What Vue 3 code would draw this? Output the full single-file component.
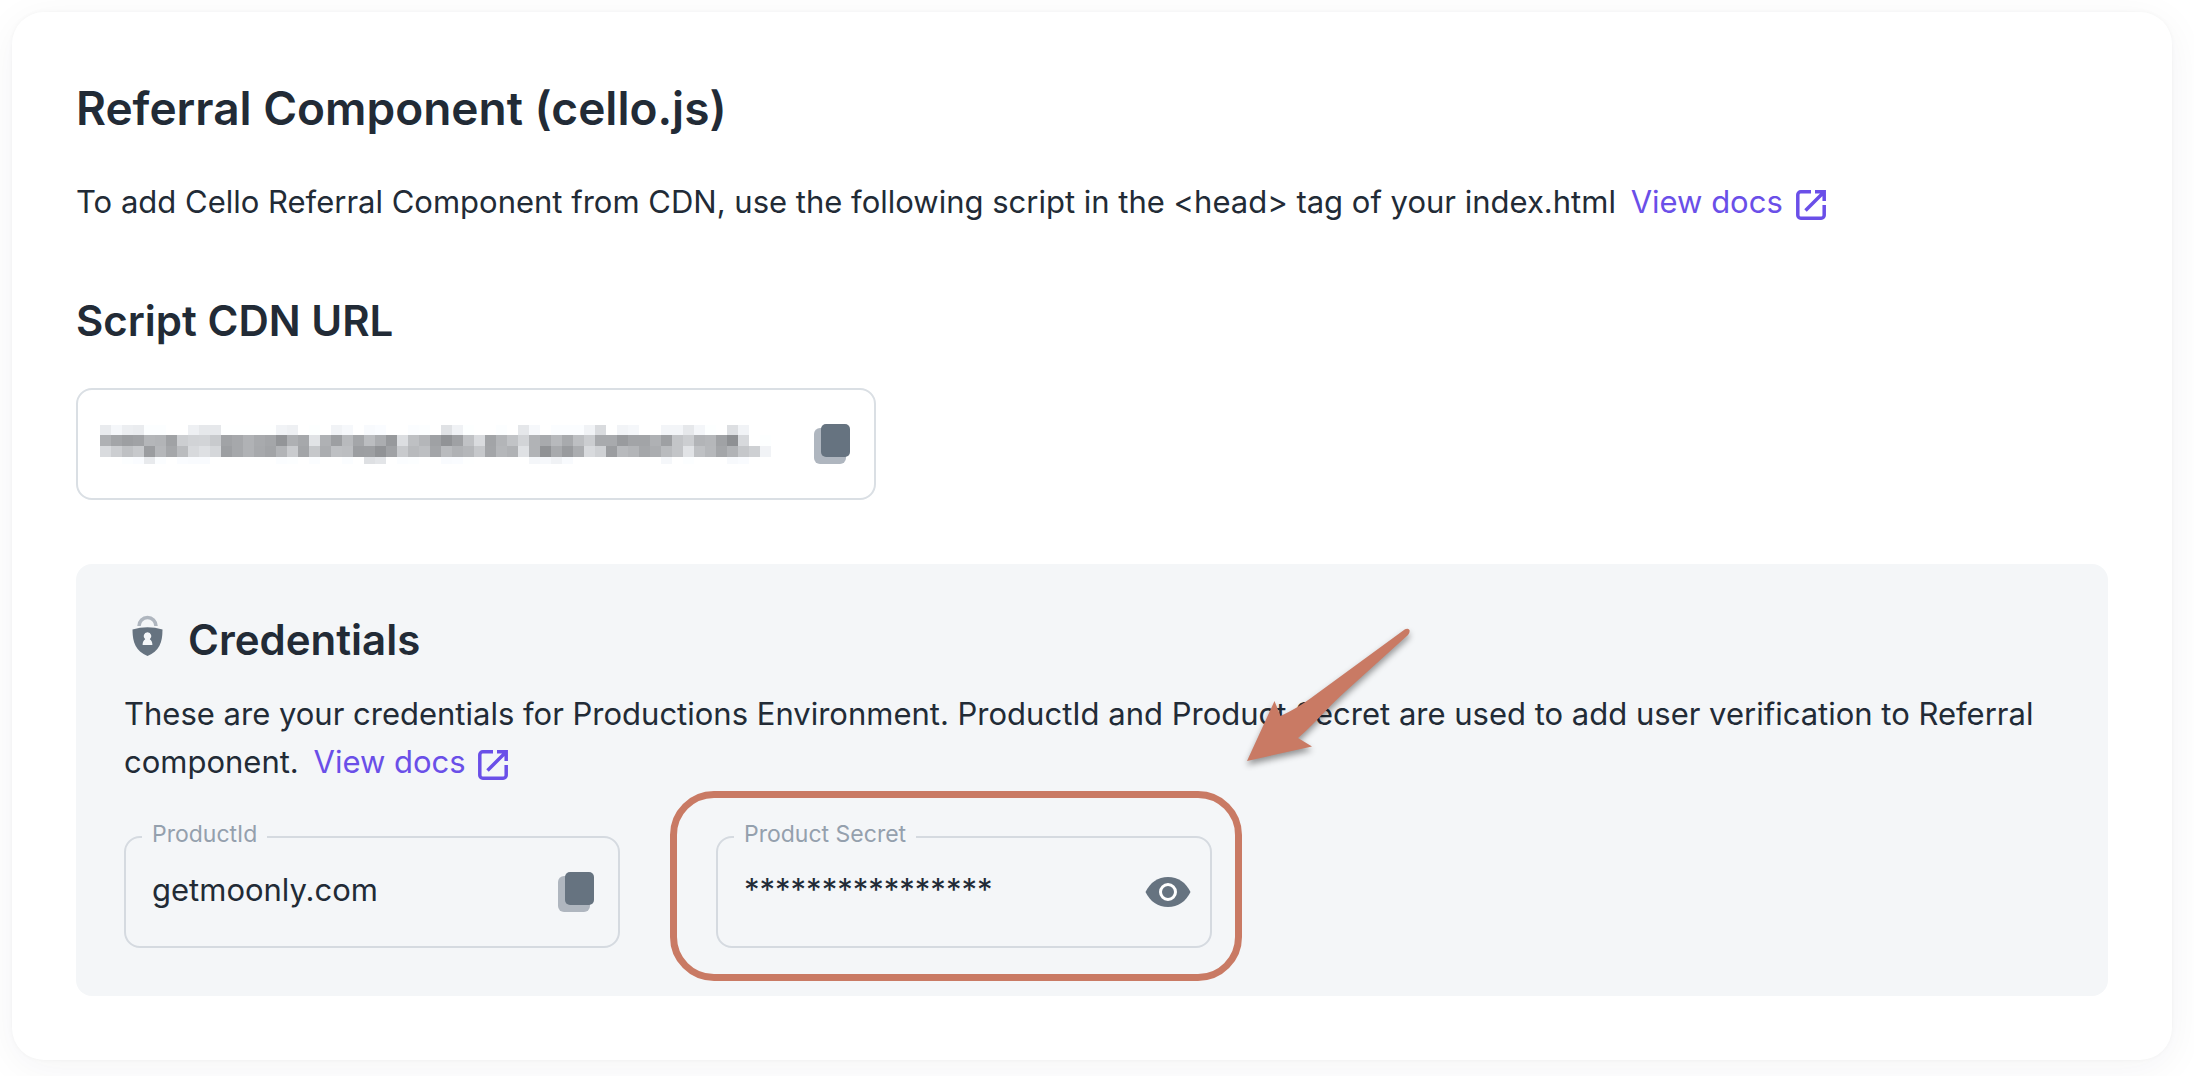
<template>
  <main class="page">
    <section class="card">
      <h1 class="title">Referral Component (cello.js)</h1>
      <p class="text intro">
        To add Cello Referral Component from CDN, use the following script in the &lt;head&gt; tag of your index.html
        <a class="docs" href="#cdn-docs">
          View docs
          <svg class="external" viewBox="0 0 30 30" aria-hidden="true">
            <path d="M15 1.8H4.800a3 3 0 0 0-3 3v20.400a3 3 0 0 0 3 3h20.400a3 3 0 0 0 3-3V15" />
            <path d="M19 1.800h9.200V11M27.500 2.500 9.500 20.500" />
          </svg>
        </a>
      </p>

      <h2 class="subtitle">Script CDN URL</h2>
      <div class="url-field">
        <svg class="url" viewBox="0 0 671 39" role="img" aria-label="Script URL" shape-rendering="crispEdges">
          <rect
            v-for="cell in cells"
            :key="cell.key"
            :x="cell.x"
            :y="cell.y"
            width="11"
            :height="cell.height"
            :fill="cell.fill"
          />
        </svg>
        <button class="icon-button" type="button" aria-label="Copy URL">
          <svg class="copy" viewBox="0 0 36 40">
            <rect class="light" y="4" width="32" height="36" rx="6" />
            <rect class="dark" x="7" width="29" height="33" rx="5" />
          </svg>
        </button>
      </div>

      <div class="credentials">
        <header class="heading">
          <svg class="shield" viewBox="0 0 48 48" aria-hidden="true">
            <path class="shackle" d="M15 14a8.500 8.500 0 0 1 17 0" />
            <path
              class="dark"
              d="M8.500 17.500Q23.500 13 38.500 17.500C38.500 31 35 39 23.500 44C12 39 8.500 31 8.500 17.500Z"
            />
            <path class="hole" d="M23.500 20.300a3.900 3.900 0 0 1 2.300 7c1.700 1 2.600 3 2.600 5.700h-9.800c0-2.700.9-4.700 2.600-5.700a3.900 3.900 0 0 1 2.300-7Z" />
          </svg>
          <h2 class="subtitle">Credentials</h2>
        </header>
        <p class="text">
          These are your credentials for Productions Environment. ProductId and Product Secret are used to add user verification to Referral component.
          <a class="docs" href="#credentials-docs">
            View docs
            <svg class="external" viewBox="0 0 30 30" aria-hidden="true">
              <path d="M15 1.8H4.800a3 3 0 0 0-3 3v20.400a3 3 0 0 0 3 3h20.400a3 3 0 0 0 3-3V15" />
              <path d="M19 1.800h9.200V11M27.500 2.500 9.500 20.500" />
            </svg>
          </a>
        </p>

        <div class="fields">
          <div class="field-wrap">
            <fieldset class="field">
              <legend><label for="product-id">ProductId</label></legend>
              <div class="field-row">
                <input id="product-id" type="text" :value="productId" readonly />
                <button class="icon-button" type="button" aria-label="Copy ProductId">
                  <svg class="copy" viewBox="0 0 36 40">
                    <rect class="light" y="4" width="32" height="36" rx="6" />
                    <rect class="dark" x="7" width="29" height="33" rx="5" />
                  </svg>
                </button>
              </div>
            </fieldset>
          </div>

          <div class="field-wrap">
            <fieldset class="field">
              <legend><label for="product-secret">Product Secret</label></legend>
              <div class="field-row">
                <input id="product-secret" type="text" :value="maskedSecret" readonly />
                <button class="icon-button" type="button" aria-label="Show secret">
                  <svg class="eye" viewBox="0 0 48 48">
                    <path class="dark" d="M1.500 24C6 14.500 14 9 24 9s18 5.500 22.500 15C42 33.500 34 39 24 39S6 33.500 1.500 24Z" />
                    <circle class="iris" cx="24" cy="24" r="7.500" />
                  </svg>
                </button>
              </div>
            </fieldset>
            <div class="ring"></div>
            <svg class="arrow" viewBox="0 0 200 170" aria-hidden="true">
              <path d="M17 149 44.500 89 50.500 104Q66 97 81 86L175 17.200Q178 16 179.500 18Q180 21 178 23L116 79Q104 90 98 96.500L82 113Q74 121 68 126L82 134.500Z" />
            </svg>
          </div>
        </div>
      </div>
    </section>
  </main>
</template>

<script setup>
import { ref, computed } from "vue";

const productId = ref("getmoonly.com");
const secretLength = ref(16);

const maskedSecret = computed(() => "*".repeat(secretLength.value));

// grey level of every block of the hidden url, two hex digits each
const mosaic = [
  {
    y: 0,
    height: 10,
    levels:
      "e9f5eceafcfcffffeee6e6fefefefefef1eefffdfff1f6fff8fafffffbfcffe0f0fdfffffcffe5f6fffbfbfbf1d9fff2f5fffff3f3e6f4fdffddf1ffff",
  },
  {
    y: 10,
    height: 11,
    levels:
      "afa39da0b4b2a0ccd1d2c8a1a6b0a8a493aea6e1af9db8a4bbab97dcbeb49f919fc0d9a2b3c1d2b1a8b7a8bdcba8a899a2a2af9ec3ccb2b5a08ed7fffd",
  },
  {
    y: 21,
    height: 11,
    levels:
      "d9ccbfc79bb5a5bad7ded59da6b0a7a2b2c9a3c6abbebc9c9d91a0c8b8bda3b9b0b5c6a3b5b0dfb190a899abd8cf9bb8b3a5abb9c3e1bfb6a4b1c5cef1",
  },
  {
    y: 32,
    height: 7,
    levels:
      "fffffcfae8fbfffaf9f9fffffffffffffbfcfffbfffffbffdee3fffbfcfffff9fafefffffffffff4f6f0f8fffffffffffffffff5fffcfffffff7f9ffff",
  },
];

const cells = computed(() =>
  mosaic.flatMap((row) =>
    row.levels.match(/../g).map((hex, index) => {
      const level = parseInt(hex, 16);
      return {
        key: `${row.y}-${index}`,
        x: index * 11,
        y: row.y,
        height: row.height,
        fill: `rgb(${level}, ${Math.min(level + 2, 255)}, ${Math.min(level + 5, 255)})`,
      };
    })
  )
);
</script>

<style>
body {
  margin: 0;
  background: #fff;
}
</style>

<style scoped>
.page {
  padding: 12px 22px 16px 12px;
  overflow: hidden;
  font-family: Inter, "Liberation Sans", sans-serif;
  color: #222b36;
}

.card {
  padding: 64px;
  border-radius: 32px;
  background: #fff;
  box-shadow: 0 0 4px rgba(30, 40, 55, 0.04), 0 8px 40px rgba(30, 40, 55, 0.05);
}

.title {
  margin: 0;
  font-size: 46px;
  font-weight: 600;
  line-height: 64px;
}

.subtitle {
  margin: 0;
  font-size: 42px;
  font-weight: 600;
  line-height: 56px;
}

.text {
  margin: 0;
  font-size: 31px;
  line-height: 48px;
}

.intro {
  margin: 38px 0 67px;
}

.docs {
  margin-left: 6px;
  color: #6a4fe8;
  text-decoration: none;
  white-space: nowrap;
}

.external {
  width: 30px;
  height: 30px;
  margin-left: 4px;
  vertical-align: -7px;
  fill: none;
  stroke: currentColor;
  stroke-width: 3.5;
}

.url-field {
  display: flex;
  align-items: center;
  justify-content: space-between;
  box-sizing: border-box;
  max-width: 800px;
  height: 112px;
  margin: 39px 0 64px;
  padding: 0 18px 0 22px;
  border: 2px solid #dadfe4;
  border-radius: 16px;
}

.url {
  width: 671px;
  height: 39px;
}

.icon-button {
  display: flex;
  flex: none;
  align-items: center;
  justify-content: center;
  width: 48px;
  height: 48px;
  padding: 0;
  border: none;
  background: none;
  cursor: pointer;
}

.copy {
  width: 36px;
  height: 40px;
}

.eye,
.shield {
  flex: none;
  width: 48px;
  height: 48px;
}

.dark {
  fill: #667380;
}

.light {
  fill: #afb6bf;
}

.shackle {
  fill: none;
  stroke: #afb6bf;
  stroke-width: 3.5;
}

.hole {
  fill: #f4f6f8;
}

.iris {
  fill: none;
  stroke: #fff;
  stroke-width: 3;
}

.credentials {
  padding: 48px;
  border-radius: 16px;
  background: #f4f6f8;
}

.heading {
  display: flex;
  gap: 16px;
  margin-bottom: 22px;
}

.fields {
  display: flex;
  gap: 96px;
  margin-top: 38px;
}

.field-wrap {
  position: relative;
  flex: 0 1 496px;
  min-width: 0;
}

.field {
  min-width: 0;
  margin: 0;
  padding: 0 18px 12px 16px;
  border: 2px solid #d5dae0;
  border-radius: 16px;
}

legend {
  padding: 0 10px 6px;
  font-size: 23px;
  line-height: 20px;
  color: #94a0ad;
}

.field-row {
  display: flex;
  align-items: center;
  height: 84px;
}

input {
  flex: 1;
  width: 100%;
  min-width: 0;
  padding: 0 10px 4px;
  border: none;
  outline: none;
  background: none;
  font-family: inherit;
  font-size: 31px;
  line-height: 40px;
  color: inherit;
}

.ring {
  position: absolute;
  inset: -33px -30px -33px -46px;
  border: 7px solid #c97a64;
  border-radius: 44px;
  pointer-events: none;
}

.arrow {
  position: absolute;
  top: -212px;
  left: 514px;
  width: 200px;
  height: 170px;
  fill: #c97a64;
  filter: drop-shadow(0 4px 3px rgba(0, 0, 0, 0.4));
  pointer-events: none;
}
</style>
